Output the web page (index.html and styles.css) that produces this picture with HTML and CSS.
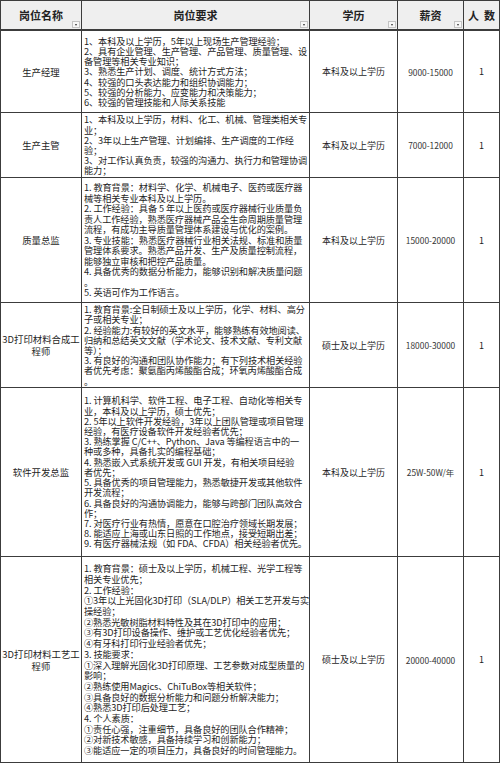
FILE: index.html
```html
<!DOCTYPE html>
<html lang="zh-CN">
<head>
<meta charset="utf-8">
<title>岗位招聘</title>
<link rel="stylesheet" href="styles.css">
</head>
<body>
<div class="sheet">
  <div class="hd c1">岗位名称<span class="dd"></span></div>
  <div class="hd c2">岗位要求<span class="dd"></span></div>
  <div class="hd c3">学历<span class="dd"></span></div>
  <div class="hd c4">薪资<span class="dd"></span></div>
  <div class="hd c5">人&nbsp;&nbsp;数</div>

  <div class="cell name">生产经理</div>
  <div class="cell req">1、本科及以上学历，5年以上现场生产管理经验；<br>2、具有企业管理、生产管理、产品管理、质量管理、设<br>备管理等相关专业知识；<br>3、熟悉生产计划、调度、统计方式方法；<br>4、较强的口头表达能力和组织协调能力；<br>5、较强的分析能力、应变能力和决策能力；<br>6、较强的管理技能和人际关系技能</div>
  <div class="cell edu">本科及以上学历</div>
  <div class="cell pay">9000-15000</div>
  <div class="cell num">1</div>

  <div class="cell name">生产主管</div>
  <div class="cell req">1、本科及以上学历，材料、化工、机械、管理类相关专<br>业；<br>2、3年以上生产管理、计划编排、生产调度的工作经<br>验；<br>3、对工作认真负责，较强的沟通力、执行力和管理协调<br>能力；</div>
  <div class="cell edu">本科及以上学历</div>
  <div class="cell pay">7000-12000</div>
  <div class="cell num">1</div>

  <div class="cell name">质量总监</div>
  <div class="cell req lh3">1. 教育背景：材料学、化学、机械电子、医药或医疗器<br>械等相关专业本科及以上学历。<br>2. 工作经验：具备 5 年以上医药或医疗器械行业质量负<br>责人工作经验，熟悉医疗器械产品全生命周期质量管理<br>流程，有成功主导质量管理体系建设与优化的案例。<br>3. 专业技能：熟悉医疗器械行业相关法规、标准和质量<br>管理体系要求。熟悉产品开发、生产及质量控制流程，<br>能够独立审核和把控产品质量。<br>4. 具备优秀的数据分析能力，能够识别和解决质量问题<br>。<br>5. 英语可作为工作语言。</div>
  <div class="cell edu">本科及以上学历</div>
  <div class="cell pay">15000-20000</div>
  <div class="cell num">1</div>

  <div class="cell name">3D打印材料合成工<br>程师</div>
  <div class="cell req">1. 教育背景:全日制硕士及以上学历，化学、材料、高分<br>子或相关专业；<br>2. 经验能力:有较好的英文水平，能够熟练有效地阅读、<br>归纳和总结英文文献（学术论文、技术文献、专利文献<br>等）；<br>3. 有良好的沟通和团队协作能力；有下列技术相关经验<br>者优先考虑：聚氨酯丙烯酸酯合成；环氧丙烯酸酯合成<br>。</div>
  <div class="cell edu">硕士及以上学历</div>
  <div class="cell pay">18000-30000</div>
  <div class="cell num">1</div>

  <div class="cell name">软件开发总监</div>
  <div class="cell req">1. 计算机科学、软件工程、电子工程、自动化等相关专<br>业，本科及以上学历，硕士优先；<br>2. 5年以上软件开发经验，3年以上团队管理或项目管理<br>经验，有医疗设备软件开发经验者优先；<br>3. 熟练掌握 C/C++、Python、Java 等编程语言中的一<br>种或多种，具备扎实的编程基础；<br>4. 熟悉嵌入式系统开发或 GUI 开发，有相关项目经验<br>者优先；<br>5. 具备优秀的项目管理能力，熟悉敏捷开发或其他软件<br>开发流程；<br>6. 具备良好的沟通协调能力，能够与跨部门团队高效合<br>作；<br>7. 对医疗行业有热情，愿意在口腔治疗领域长期发展；<br>8. 能适应上海或山东日照的工作地点，接受短期出差；<br>9. 有医疗器械法规（如 FDA、CFDA）相关经验者优先。</div>
  <div class="cell edu">本科及以上学历</div>
  <div class="cell pay">25W-50W/年</div>
  <div class="cell num">1</div>

  <div class="cell name">3D打印材料工艺工<br>程师</div>
  <div class="cell req lh6">1. 教育背景：硕士及以上学历，机械工程、光学工程等<br>相关专业优先；<br>2. 工作经验：<br>①3年以上光固化3D打印（SLA/DLP）相关工艺开发与实<br>操经验；<br>②熟悉光敏树脂材料特性及其在3D打印中的应用；<br>③有3D打印设备操作、维护或工艺优化经验者优先；<br>④有牙科打印行业经验者优先；<br>3. 技能要求：<br>①深入理解光固化3D打印原理、工艺参数对成型质量的<br>影响；<br>②熟练使用Magics、ChiTuBox等相关软件；<br>③具备良好的数据分析能力和问题分析解决能力；<br>④熟悉3D打印后处理工艺；<br>4. 个人素质：<br>①责任心强，注重细节，具备良好的团队合作精神；<br>②对新技术敏感，具备持续学习和创新能力；<br>③能适应一定的项目压力，具备良好的时间管理能力。</div>
  <div class="cell edu">硕士及以上学历</div>
  <div class="cell pay">20000-40000</div>
  <div class="cell num">1</div>
</div>
</body>
</html>
```

FILE: styles.css
```css
html, body {
  margin: 0;
  padding: 0;
  background: #ffffff;
  overflow: hidden;
}

body {
  font-family: "Noto Sans CJK SC", "Noto Sans", sans-serif;
  color: #1e1e1e;
}

.sheet {
  display: grid;
  grid-template-columns: 81px 228px 88px 66px 36px;
  grid-template-rows: 30px 82px 65px 125px 85px 169px 206px;
  border-top: 1px solid #3c3c3c;
  border-left: 1px solid #3c3c3c;
  width: 499px;
}

.hd,
.cell {
  box-sizing: border-box;
  border-right: 1px solid #3c3c3c;
  border-bottom: 1px solid #3c3c3c;
  display: flex;
  align-items: center;
  justify-content: center;
  text-align: center;
  overflow: hidden;
}

.hd {
  position: relative;
  background: #efefef;
  border-bottom: 2px solid #3c3c3c;
  font-size: 11px;
  font-weight: bold;
  color: #222;
  white-space: nowrap;
}

.hd.c5 {
  justify-content: flex-start;
  padding-left: 4px;
}

.dd {
  position: absolute;
  right: 1px;
  bottom: 1px;
  width: 8px;
  height: 7px;
  box-sizing: border-box;
  background: #f7f7f7;
  border: 1px solid #c4c4c4;
}

.dd::after {
  content: "";
  position: absolute;
  left: 2px;
  top: 2px;
  border-left: 1.5px solid transparent;
  border-right: 1.5px solid transparent;
  border-top: 2px solid #333;
}

.name {
  font-size: 9.4px;
  line-height: 12px;
}

.req {
  justify-content: flex-start;
  text-align: left;
  padding-left: 2px;
  font-size: 9.2px;
  line-height: 10.2px;
  white-space: nowrap;
  letter-spacing: -0.1px;
}

.req.lh3 {
  line-height: 10.5px;
}

.req.lh6 {
  line-height: 10.7px;
}

.edu {
  font-size: 9px;
}

.pay {
  font-size: 8.4px;
  color: #333;
}

.num {
  font-size: 9px;
}
```
